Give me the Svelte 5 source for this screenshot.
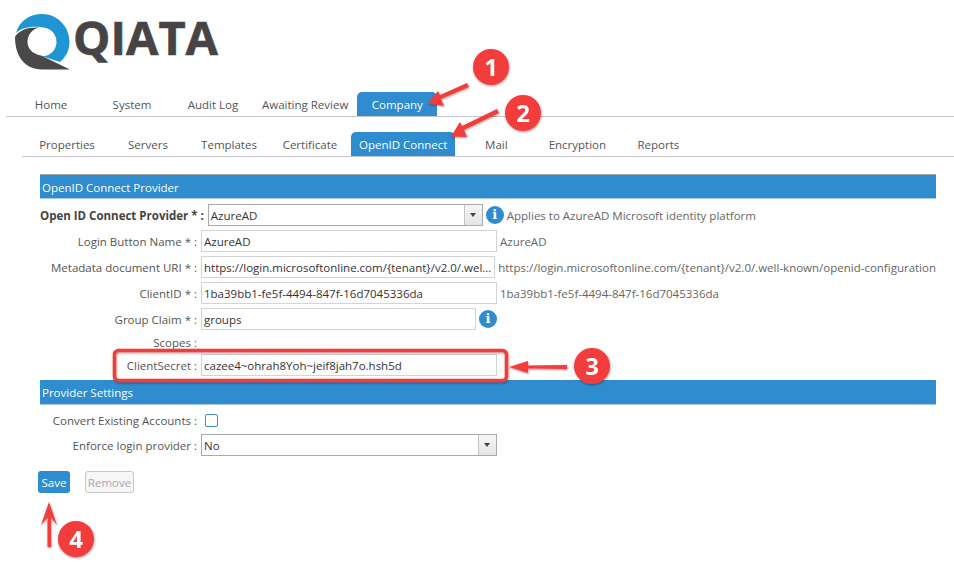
<script lang="ts">
    const mainTabs = ["Home", "System", "Audit Log", "Awaiting Review", "Company"];
    const subTabs = ["Properties", "Servers", "Templates", "Certificate", "OpenID Connect", "Mail", "Encryption", "Reports"];
    const metadata = "https://login.microsoftonline.com/{tenant}/v2.0/.well-known/openid-configuration";
    const clientId = "1ba39bb1-fe5f-4494-847f-16d7045336da";

    // callouts drawn over the screenshot: [cx, cy, number]
    const badges = [
        [491, 67, "1"],
        [523, 113, "2"],
        [592, 366, "3"],
        [76, 539, "4"],
    ];
</script>

<div class="page">
    <header class="brand">
        <svg class="mark" width="68" height="60" viewBox="8 12 60 60" aria-hidden="true">
            <path fill="#1f95d3" d="M12 33C15 21 26 14 38 14C54 14 65.5 27 65.5 42C65.5 50 62 57 56 62L37.500 56C46 57 52.500 50 52.500 42C52.500 33 46 27.500 36 27C26 26 17 28 12 33Z" />
            <path fill="#4a4849" d="M35 27.500C24 27 15 30 11 37C11 55 20 69.500 38 69.500L66 69.500L37 55.500C28 54 23.500 48 23.500 42C23.500 35 28 29 35 27.500Z" />
        </svg>
        <span class="wordmark">QIATA</span>
    </header>

    <nav class="tabs main">
        {#each mainTabs as tab}
            <span class="tab" class:active={tab === "Company"}>{tab}</span>
        {/each}
    </nav>
    <nav class="tabs sub">
        {#each subTabs as tab}
            <span class="tab" class:active={tab === "OpenID Connect"}>{tab}</span>
        {/each}
    </nav>

    <section class="form">
        <h2>OpenID Connect Provider</h2>
        <div class="rows">
            <div class="row">
                <span class="label strong">Open ID Connect Provider * :</span>
                <div class="select short"><span>AzureAD</span><i class="caret"></i></div>
                <span class="info">i</span>
                <span class="hint">Applies to AzureAD Microsoft identity platform</span>
            </div>
            <div class="row">
                <span class="label">Login Button Name * :</span>
                <input value="AzureAD" readonly />
                <span class="hint">AzureAD</span>
            </div>
            <div class="row">
                <span class="label">Metadata document URI * :</span>
                <input value={metadata} readonly />
                <span class="hint">{metadata}</span>
            </div>
            <div class="row">
                <span class="label">ClientID * :</span>
                <input value={clientId} readonly />
                <span class="hint">{clientId}</span>
            </div>
            <div class="row">
                <span class="label">Group Claim * :</span>
                <input class="short" value="groups" readonly />
                <span class="info">i</span>
            </div>
            <div class="row bare">
                <span class="label">Scopes :</span>
            </div>
            <div class="row">
                <span class="label">ClientSecret :</span>
                <input value="cazee4~ohrah8Yoh~jeif8jah7o.hsh5d" readonly />
            </div>
        </div>

        <h2 class="second">Provider Settings</h2>
        <div class="rows">
            <div class="row check">
                <span class="label">Convert Existing Accounts :</span>
                <span class="checkbox"></span>
            </div>
            <div class="row">
                <span class="label">Enforce login provider :</span>
                <div class="select"><span>No</span><i class="caret"></i></div>
            </div>
        </div>
    </section>

    <div class="actions">
        <button class="save">Save</button>
        <button class="remove" disabled>Remove</button>
    </div>

    <svg class="callouts" width="954" height="586" viewBox="0 0 954 586" aria-hidden="true">
        <defs>
            <filter id="lift" x="-30%" y="-30%" width="160%" height="160%">
                <feDropShadow dx="0.5" dy="1" stdDeviation="0.8" flood-color="#000" flood-opacity="0.4" />
            </filter>
        </defs>
        <g filter="url(#lift)" fill="#f33c3c">
            <rect x="114.500" y="350.500" width="392" height="30" rx="4" fill="none" stroke="#f33c3c" stroke-width="3.500" />
            <path d="M467 83L469 87L441 99L444 106L428 103.500L438 91L440 95Z" />
            <path d="M497 109L499 113L464 130L467 137L451 136.500L460 122L462 126Z" />
            <path d="M567 365V369L528 368.500V373L509 367L528 361V365.500Z" />
            <path d="M47.500 547H51V517.500L57 525L49 502L41 525L47.500 517.500Z" />
            {#each badges as [cx, cy, n]}
                <circle {cx} {cy} r="18" />
                <text x={cx} y={+cy + 8.500} text-anchor="middle">{n}</text>
            {/each}
        </g>
    </svg>
</div>

<style>
    :global(body) {
        background: #fff;
    }
    .page {
        position: relative;
        width: 954px;
        height: 586px;
        overflow: hidden;
        font-family: "Open Sans", sans-serif;
        font-size: 11.5px;
        color: #555;
    }
    .brand {
        display: flex;
        align-items: flex-start;
        height: 92px;
        padding: 12px 0 0 8px;
        box-sizing: border-box;
    }
    .mark {
        flex-shrink: 0;
    }
    .wordmark {
        margin: -7px 0 0 -3px;
        font-size: 47px;
        font-weight: 700;
        line-height: 64px;
        color: #464445;
        -webkit-text-stroke: 0.6px #464445;
    }
    .tabs {
        display: flex;
        gap: 1px;
        height: 24px;
        border-bottom: 1px solid #c4c4ca;
    }
    .main {
        margin-left: 6px;
        padding-left: 5px;
    }
    .sub {
        margin: 15px 0 0 22px;
        padding-left: 5px;
    }
    .tab {
        min-width: 80px;
        box-sizing: border-box;
        padding: 0 8px;
        line-height: 26px;
        text-align: center;
        white-space: nowrap;
    }
    .tab.active {
        background: #2e8ccf;
        border-radius: 5px 5px 0 0;
        color: #fff;
    }
    .form {
        margin: 17px 18px 0 40px;
    }
    h2 {
        margin: 0;
        height: 25px;
        box-sizing: border-box;
        padding-left: 2px;
        background: #2e8ccf;
        border-top: 1px solid #9fa6ab;
        border-bottom: 1px solid #a9c8de;
        font-size: 11.5px;
        font-weight: 400;
        line-height: 25px;
        color: #fff;
    }
    .second {
        margin-top: 4px;
        border-top: 0;
    }
    .rows {
        display: flex;
        flex-direction: column;
        gap: 4px;
        margin-top: 5px;
    }
    .row {
        display: flex;
        align-items: center;
        height: 22px;
    }
    .row.bare {
        height: 16px;
    }
    .row.check {
        height: 20px;
    }
    .label {
        flex: 0 0 157px;
        margin-right: 4px;
        text-align: right;
        white-space: nowrap;
    }
    .strong {
        font-weight: 700;
        color: #444;
    }
    input,
    .select {
        box-sizing: border-box;
        width: 296px;
        height: 22px;
        padding: 0 2px;
        border: 1px solid #d4d4d4;
        background: #fff;
        font: inherit;
        color: #333;
        outline: none;
        text-overflow: ellipsis;
    }
    input.short {
        width: 275px;
    }
    .select {
        position: relative;
        display: flex;
        align-items: center;
        border-color: #a9a9a9;
    }
    .select.short {
        width: 275px;
    }
    .caret {
        position: absolute;
        top: 0;
        right: 0;
        bottom: 0;
        width: 17px;
        border-left: 1px solid #c4c4c4;
        background: linear-gradient(#f6f6f6, #e4e4e4);
    }
    .caret::after {
        content: "";
        position: absolute;
        top: 8px;
        left: 5px;
        border: 3.5px solid transparent;
        border-top: 4px solid #444;
        border-bottom: 0;
    }
    .info {
        flex-shrink: 0;
        width: 18px;
        height: 18px;
        margin-left: 3px;
        border-radius: 50%;
        background: #2e8ccf;
        font-family: "DejaVu Serif", serif;
        font-size: 13px;
        font-weight: 700;
        line-height: 18px;
        text-align: center;
        color: #fff;
    }
    .hint {
        margin-left: 3px;
        white-space: nowrap;
        color: #666;
    }
    .checkbox {
        width: 13px;
        height: 13px;
        margin-left: 4px;
        box-sizing: border-box;
        border: 1.5px solid #3e8fc9;
        border-radius: 2px;
    }
    .actions {
        display: flex;
        gap: 15px;
        margin: 15px 0 0 38px;
    }
    button {
        height: 22px;
        padding: 0;
        border-radius: 3px;
        font: inherit;
    }
    .save {
        width: 32px;
        border: 0;
        background: #2e8ccf;
        color: #fff;
    }
    .remove {
        width: 49px;
        border: 1px solid #c8c8c8;
        background: #f6f6f6;
        color: #aaa;
    }
    .callouts {
        position: absolute;
        inset: 0;
        pointer-events: none;
    }
    .callouts text {
        font-family: "Open Sans", sans-serif;
        font-size: 24px;
        font-weight: 700;
        fill: #fff;
    }
</style>
